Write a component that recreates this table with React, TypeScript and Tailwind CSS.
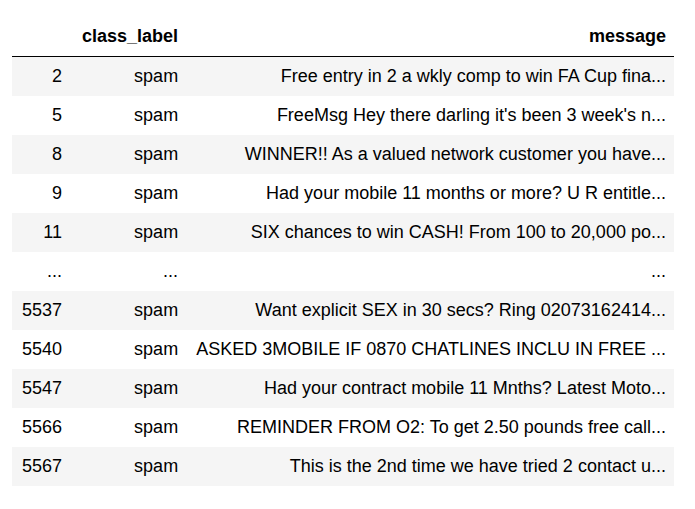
const rows: [string, string, string][] = [
  ['2', 'spam', 'Free entry in 2 a wkly comp to win FA Cup fina...'],
  ['5', 'spam', "FreeMsg Hey there darling it's been 3 week's n..."],
  ['8', 'spam', 'WINNER!! As a valued network customer you have...'],
  ['9', 'spam', 'Had your mobile 11 months or more? U R entitle...'],
  ['11', 'spam', 'SIX chances to win CASH! From 100 to 20,000 po...'],
  ['...', '...', '...'],
  ['5537', 'spam', 'Want explicit SEX in 30 secs? Ring 02073162414...'],
  ['5540', 'spam', 'ASKED 3MOBILE IF 0870 CHATLINES INCLU IN FREE ...'],
  ['5547', 'spam', 'Had your contract mobile 11 Mnths? Latest Moto...'],
  ['5566', 'spam', 'REMINDER FROM O2: To get 2.50 pounds free call...'],
  ['5567', 'spam', 'This is the 2nd time we have tried 2 contact u...'],
]

export default function App() {
  return (
    <div className="min-h-[509px] bg-white pt-[17px] pl-[12px] font-['Liberation_Sans',Arial,sans-serif] text-[18px] leading-[21px] text-black">
      <table className="border-collapse">
        <thead>
          <tr className="border-b border-black">
            <th className="px-[10px] py-[9px]"></th>
            <th className="pl-[10px] pr-[9px] py-[9px] text-right font-bold">class_label</th>
            <th className="pl-[9px] pr-[8px] py-[9px] text-right font-bold">message</th>
          </tr>
        </thead>
        <tbody>
          {rows.map((r, i) => (
            <tr key={i} className={i % 2 === 0 ? 'bg-[#f5f5f5]' : 'bg-white'}>
              <td className="px-[10px] py-[9px] text-right whitespace-nowrap">{r[0]}</td>
              <td className="pl-[10px] pr-[9px] py-[9px] text-right whitespace-nowrap">{r[1]}</td>
              <td className="pl-[9px] pr-[8px] py-[9px] text-right whitespace-nowrap">{r[2]}</td>
            </tr>
          ))}
        </tbody>
      </table>
    </div>
  )
}
